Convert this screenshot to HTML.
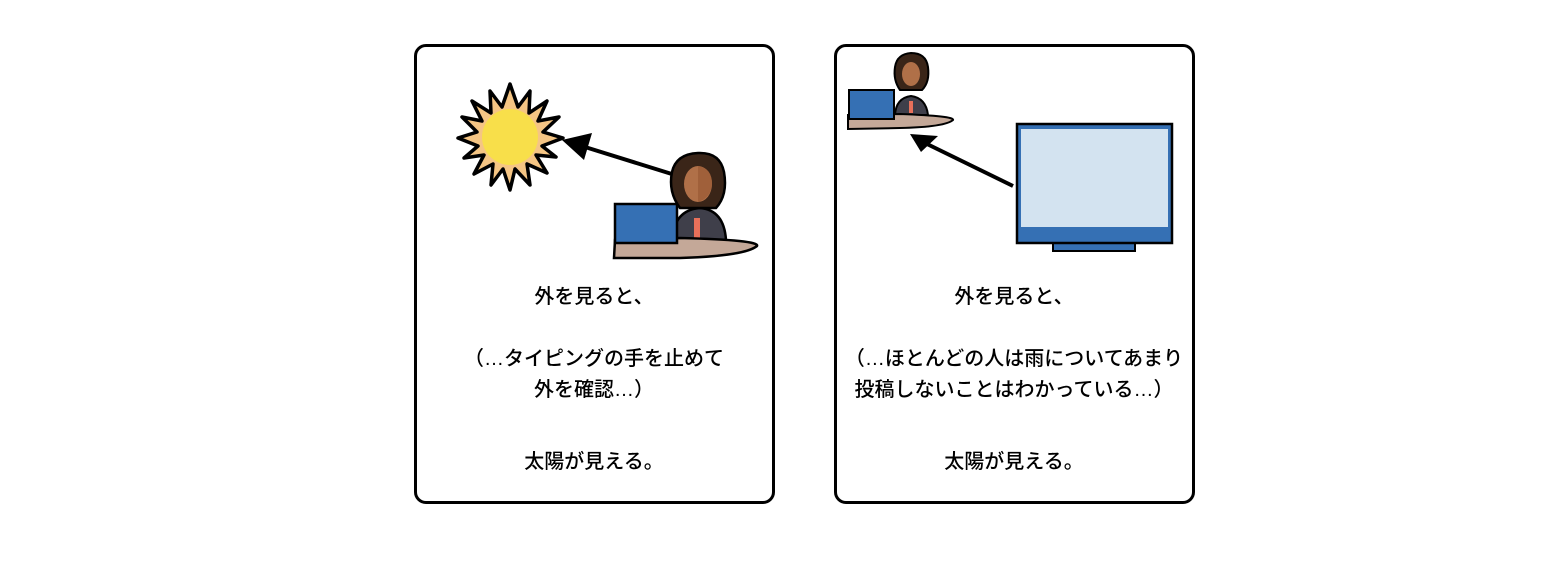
<!DOCTYPE html>
<html><head><meta charset="utf-8"><style>
body{margin:0;width:1557px;height:577px;background:#fff;position:relative;overflow:hidden;font-family:"Liberation Sans","Noto Sans CJK JP",sans-serif;}
.card{position:absolute;top:44px;width:355px;height:454px;border:3px solid #000;border-radius:12px;background:#fff;}
.t{position:absolute;width:400px;text-align:center;font-size:20px;line-height:30px;color:#000;white-space:nowrap;font-weight:500;}
svg{position:absolute;left:0;top:0}
</style></head><body>
<div class="card" style="left:414px"></div>
<div class="card" style="left:834px"></div>
<svg width="1557" height="577">
<g transform="translate(510,137)">
<polygon fill="#f5c584" stroke="#000" stroke-width="3.5" stroke-linejoin="round" points="0,-53 8,-30 20,-46 19,-24 37,-36 28,-16 49,-20 33,-5 53,1 32,9 46,20 26,18 37,36 17,27 20,48 5,32 0,53 -7,32 -19,48 -17,27 -36,37 -26,18 -46,21 -32,9 -52,1 -33,-5 -48,-20 -28,-16 -38,-36 -19,-24 -20,-46 -8,-30"/>
<circle r="28" fill="#f8df4a"/>
</g>
<line x1="675" y1="175" x2="585" y2="147" stroke="#000" stroke-width="4"/>
<polygon points="562,140 592,133 584,160" fill="#000"/>
<g>
<path d="M672,240 Q674,210 700,208 Q724,210 726,240 Z" fill="#3f3f4a" stroke="#000" stroke-width="2.5"/>
<rect x="694" y="218" width="6" height="20" fill="#e8705a"/>
<path d="M698,153 Q720,152 724,172 Q728,195 716,208 L680,208 Q668,192 672,172 Q676,154 698,153 Z" fill="#3a2518" stroke="#000" stroke-width="2.5"/>
<ellipse cx="698" cy="184" rx="14" ry="18" fill="#b07048"/>
<path d="M698,166 L698,202 Q711,198 712,184 Q712,168 698,166Z" fill="#a0603a"/>
<path d="M615,240 L680,238 Q760,240 757,246 Q745,256 680,258 L614,258 Z" fill="#c4a898" stroke="#000" stroke-width="2.5"/>
<rect x="615" y="204" width="62" height="39" fill="#3570b4" stroke="#000" stroke-width="2.5"/>
</g>
<g>
<path d="M895,115 Q896,98 911,96 Q926,98 928,115 Z" fill="#3f3f4a" stroke="#000" stroke-width="2"/>
<rect x="909" y="101" width="4" height="12" fill="#e8705a"/>
<path d="M911,53 Q926,53 928,67 Q930,82 922,90 L900,90 Q893,80 895,67 Q897,54 911,53Z" fill="#3a2518" stroke="#000" stroke-width="2"/>
<ellipse cx="911" cy="74" rx="9" ry="12" fill="#b07048"/>
<path d="M848,115 L900,114 Q955,116 953,120 Q945,127 900,128 L848,129 Z" fill="#c4a898" stroke="#000" stroke-width="2"/>
<rect x="849" y="90" width="45" height="29" fill="#3570b4" stroke="#000" stroke-width="2"/>
</g>
<line x1="1013" y1="186" x2="925" y2="143" stroke="#000" stroke-width="4"/>
<polygon points="910,134 938,136 921,152" fill="#000"/>
<rect x="1053" y="240" width="82" height="11" fill="#3570b4" stroke="#000" stroke-width="2"/>
<rect x="1017" y="124" width="155" height="119" fill="#3570b4" stroke="#000" stroke-width="2.5"/>
<rect x="1021" y="129" width="147" height="98" fill="#d3e3f0"/>
</svg>
<div class="t" style="left:394px;top:282px">外を見ると、</div>
<div class="t" style="left:394px;top:344px">（…タイピングの手を止めて</div>
<div class="t" style="left:394px;top:375px">外を確認…）</div>
<div class="t" style="left:394px;top:447px">太陽が見える。</div>
<div class="t" style="left:814px;top:282px">外を見ると、</div>
<div class="t" style="left:814px;top:344px">（…ほとんどの人は雨についてあまり</div>
<div class="t" style="left:814px;top:375px">投稿しないことはわかっている…）</div>
<div class="t" style="left:814px;top:447px">太陽が見える。</div>
</body></html>
